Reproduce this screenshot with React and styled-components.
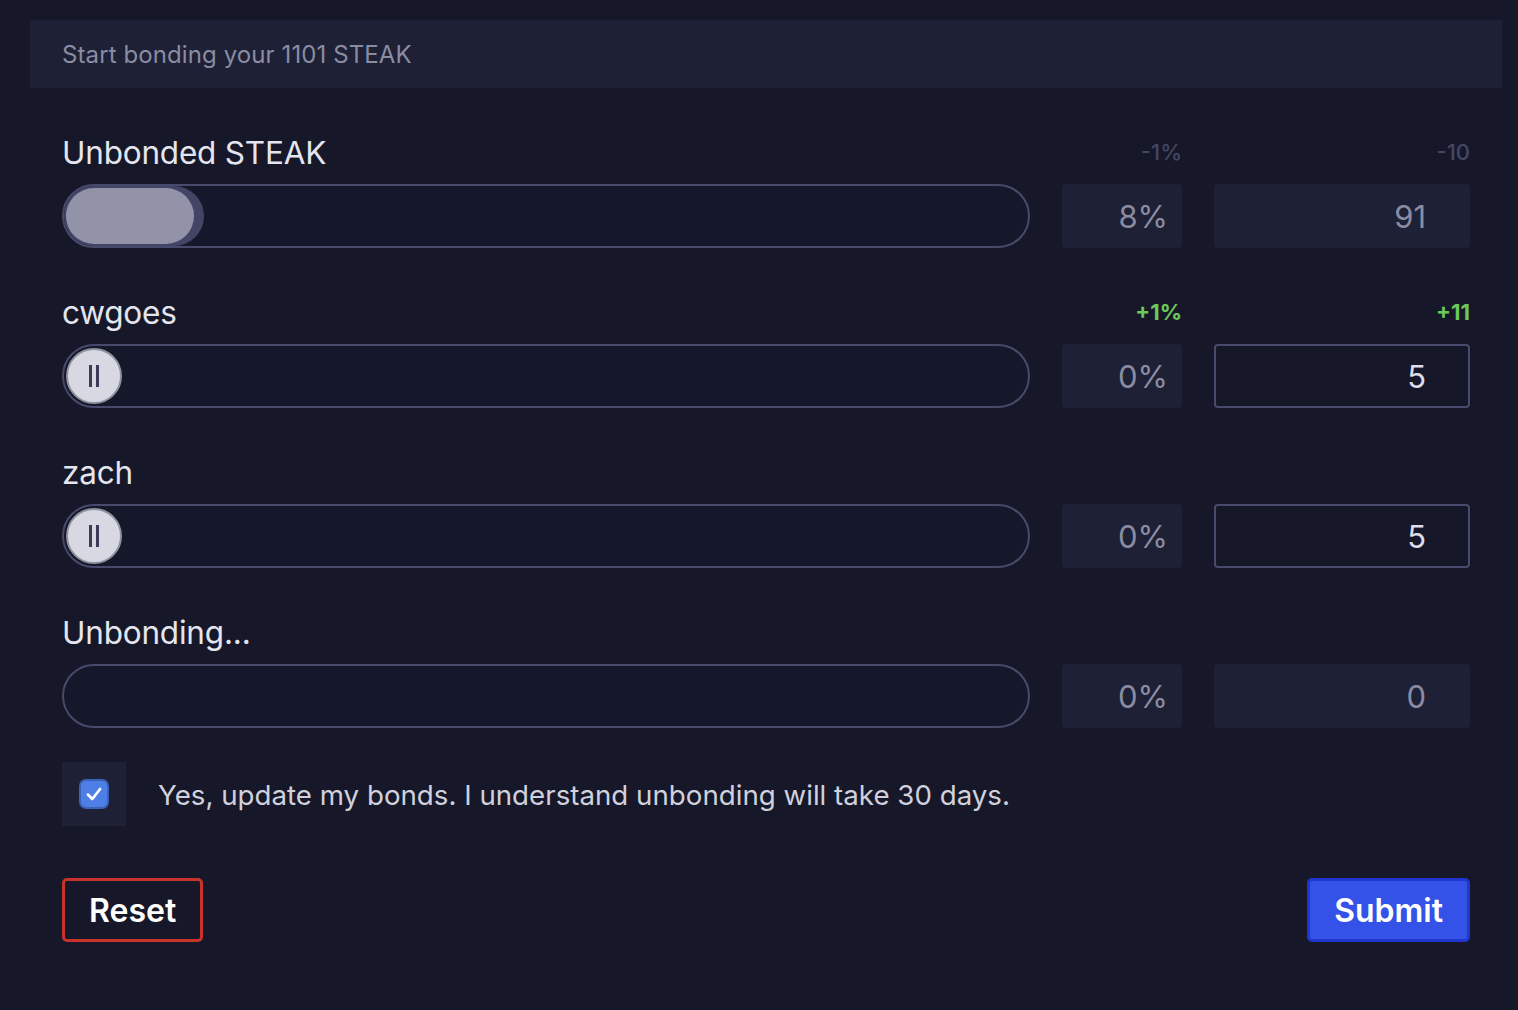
import React from 'react'
import styled, { createGlobalStyle } from 'styled-components'

const Global = createGlobalStyle`
  html, body {
    margin: 0;
    padding: 0;
    background: #161829;
    font-family: Inter, "Noto Sans", "Liberation Sans", sans-serif;
  }
`

const Page = styled.div`
  padding: 20px 16px 40px 30px;
  min-height: 1010px;
  box-sizing: border-box;
  background: #161829;
`

const Header = styled.div`
  height: 68px;
  display: flex;
  align-items: center;
  padding: 0 32px;
  background: #1e2035;
  color: #8a8ca3;
  font-size: 24px;
  letter-spacing: 0.1px;
`

const Body = styled.div`
  padding: 48px 32px 0;
  display: flex;
  flex-direction: column;
`

const Row = styled.div`
  display: grid;
  grid-template-columns: 968px 120px 256px;
  column-gap: 32px;
  margin-bottom: 48px;
`

const Label = styled.div`
  height: 48px;
  display: flex;
  align-items: center;
  padding-bottom: 16px;
  box-sizing: border-box;
  color: #e4e5ee;
  font-size: 31.5px;
  letter-spacing: -0.2px;
`

const Delta = styled.div`
  height: 48px;
  display: flex;
  align-items: center;
  justify-content: flex-end;
  padding-bottom: 16px;
  box-sizing: border-box;
  font-size: 22px;
  font-weight: ${({ $up }) => ($up ? 700 : 500)};
  color: ${({ $up }) => ($up ? '#6cc85a' : '#444766')};
`

const Track = styled.div`
  height: 64px;
  box-sizing: border-box;
  border: 2px solid #484a6b;
  border-radius: 32px;
  background: #15172a;
  display: flex;
  align-items: center;
`

const Fill = styled.div`
  height: 60px;
  width: 140px;
  border-radius: 30px;
  background: #434566;
  display: flex;
  align-items: center;
  padding-left: 2px;
  box-sizing: border-box;
`

const FillKnob = styled.div`
  height: 56px;
  width: 128px;
  border-radius: 28px;
  background: #9293a8;
`

const Thumb = styled.div`
  width: 56px;
  height: 56px;
  margin-left: 2px;
  box-sizing: border-box;
  border-radius: 50%;
  background: #d8d8e2;
  border: 2px solid #8f93a0;
  display: flex;
  align-items: center;
  justify-content: center;
  gap: 4px;
`

const Grip = styled.span`
  width: 3px;
  height: 22px;
  background: #3a3c55;
`

const Box = styled.div`
  height: 64px;
  box-sizing: border-box;
  border-radius: 4px;
  display: flex;
  align-items: center;
  justify-content: flex-end;
  font-size: 31px;
  background: ${({ $edit }) => ($edit ? 'transparent' : '#1e2035')};
  border: ${({ $edit }) => ($edit ? '2px solid #484a6b' : 'none')};
  color: ${({ $edit }) => ($edit ? '#dcdde6' : '#8a8ca3')};
  padding-right: ${({ $pad }) => $pad}px;
`

const Confirm = styled.div`
  display: flex;
  align-items: center;
  gap: 32px;
  margin-top: -14px;
`

const CheckWrap = styled.div`
  width: 64px;
  height: 64px;
  background: #1e2035;
  display: flex;
  align-items: center;
  justify-content: center;
`

const Check = styled.div`
  width: 30px;
  height: 30px;
  box-sizing: border-box;
  border-radius: 7px;
  background: #4d7fe6;
  border: 2px solid #3962b8;
  display: flex;
  align-items: center;
  justify-content: center;
`

const ConfirmText = styled.div`
  color: #d0d1dc;
  font-size: 27.7px;
  padding-top: 2px;
`

const Actions = styled.div`
  display: flex;
  justify-content: space-between;
  margin-top: 52px;
`

const Button = styled.button`
  height: 64px;
  box-sizing: border-box;
  border-radius: 5px;
  font-family: inherit;
  font-size: 32px;
  font-weight: 600;
  color: #ffffff;
  cursor: pointer;
  padding: 0 24px;
  background: ${({ $primary }) => ($primary ? '#3451e8' : 'transparent')};
  border: 3px solid ${({ $primary }) => ($primary ? '#1f37cf' : '#c9312b')};
`

const rows = [
  { name: 'Unbonded STEAK', pct: '8%', val: '91', dp: '-1%', dv: '-10', mode: 'fill' },
  { name: 'cwgoes', pct: '0%', val: '5', dp: '+1%', dv: '+11', up: true, mode: 'thumb', edit: true },
  { name: 'zach', pct: '0%', val: '5', mode: 'thumb', edit: true },
  { name: 'Unbonding...', pct: '0%', val: '0', mode: 'none' },
]

const App = () => (
  <Page>
    <Global />
    <Header>Start bonding your 1101 STEAK</Header>
    <Body>
      {rows.map(r => (
        <Row key={r.name}>
          <Label>{r.name}</Label>
          <Delta $up={r.up}>{r.dp}</Delta>
          <Delta $up={r.up}>{r.dv}</Delta>
          <Track>
            {r.mode === 'fill' && (
              <Fill>
                <FillKnob />
              </Fill>
            )}
            {r.mode === 'thumb' && (
              <Thumb>
                <Grip />
                <Grip />
              </Thumb>
            )}
          </Track>
          <Box $pad={14}>{r.pct}</Box>
          <Box $edit={r.edit} $pad={r.edit ? 42 : 44}>{r.val}</Box>
        </Row>
      ))}
      <Confirm>
        <CheckWrap>
          <Check>
            <svg width="20" height="20" viewBox="0 0 18 18" fill="none">
              <path d="M3.5 9.5 L7.5 13.5 L14.5 4.5" stroke="#fff" strokeWidth="2.4" strokeLinecap="round" strokeLinejoin="round" />
            </svg>
          </Check>
        </CheckWrap>
        <ConfirmText>Yes, update my bonds. I understand unbonding will take 30 days.</ConfirmText>
      </Confirm>
      <Actions>
        <Button>Reset</Button>
        <Button $primary>Submit</Button>
      </Actions>
    </Body>
  </Page>
)

export default App
